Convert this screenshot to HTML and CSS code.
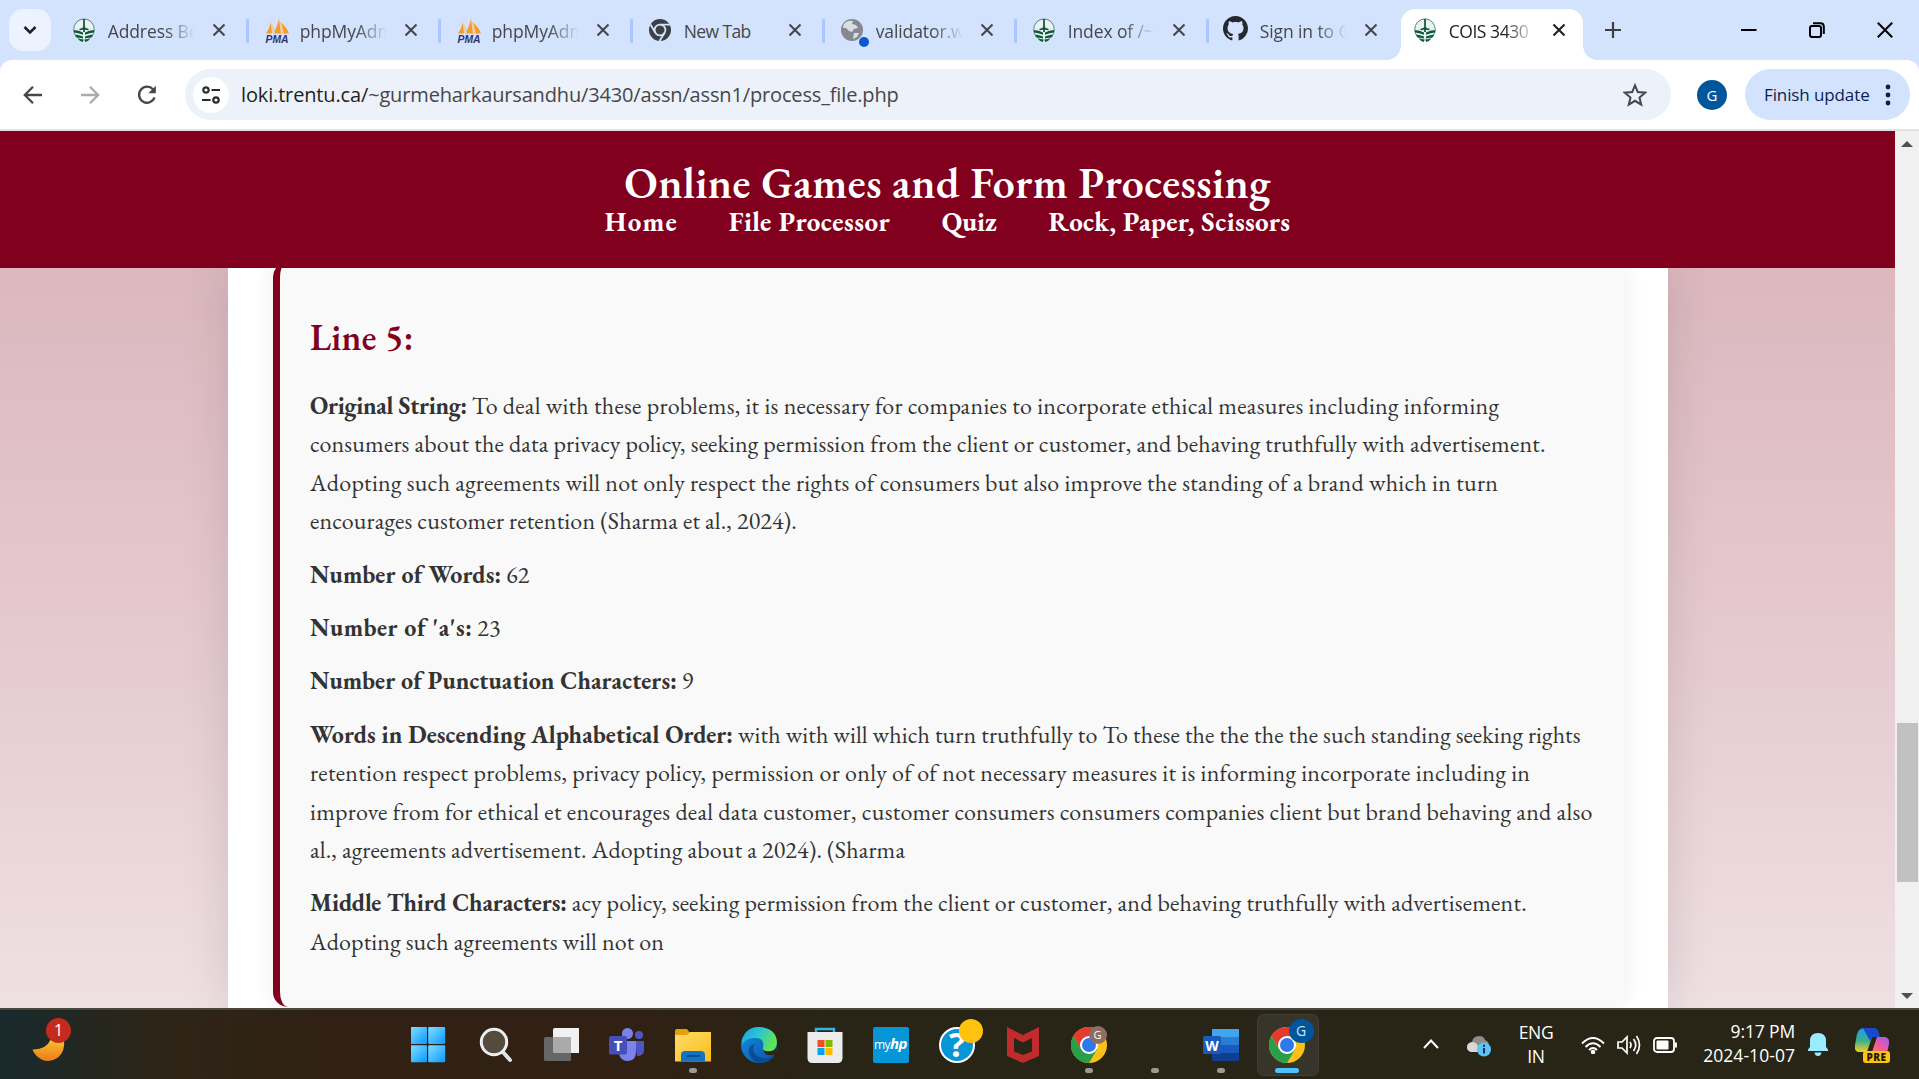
FILE: index.html
```html
<!DOCTYPE html>
<html lang="en">
<head>
<meta charset="utf-8">
<title>COIS 3430</title>
<link rel="stylesheet" href="styles.css">
</head>
<body>
<svg class="defs" width="0" height="0" aria-hidden="true">
  <defs>
    <linearGradient id="gold" x1="0" y1="0" x2="0" y2="1"><stop offset="0" stop-color="#f7c331"/><stop offset="1" stop-color="#ee7a17"/></linearGradient>
    <linearGradient id="win" x1="0" y1="0" x2="1" y2="1"><stop offset="0" stop-color="#7fe0ff"/><stop offset="1" stop-color="#0a98ff"/></linearGradient>
    <linearGradient id="folder" x1="0" y1="0" x2="1" y2="1"><stop offset="0" stop-color="#ffdc6b"/><stop offset="1" stop-color="#fbbd17"/></linearGradient>
    <linearGradient id="edgeTop" x1="0" y1="0" x2="1" y2=".4"><stop offset="0" stop-color="#1a9fe0"/><stop offset=".5" stop-color="#2cc4d6"/><stop offset="1" stop-color="#62e455"/></linearGradient>
    <linearGradient id="edgeLow" x1="0" y1="0" x2="1" y2="1"><stop offset="0" stop-color="#1290e4"/><stop offset="1" stop-color="#0b4fa0"/></linearGradient>
    <linearGradient id="copA" x1="0" y1="0" x2="0" y2="1"><stop offset="0" stop-color="#1c9cf0"/><stop offset=".55" stop-color="#3fb287"/><stop offset="1" stop-color="#f5cf22"/></linearGradient>
    <linearGradient id="copB" x1="1" y1="0" x2="0" y2="1"><stop offset="0" stop-color="#9a5cf5"/><stop offset=".5" stop-color="#ef5a9c"/><stop offset="1" stop-color="#ff8355"/></linearGradient>
  </defs>
  <symbol id="trent" viewBox="0 0 22 24">
    <ellipse cx="11" cy="11.5" rx="10.3" ry="10.6" fill="#e8f1f3" stroke="#4e8c72" stroke-width="1"/>
    <path d="M11 1v13M6.500 11.500q3.300 0 4.500-2 1.200 2 4.500 2" fill="none" stroke="#0d5237" stroke-width="1.700"/>
    <path d="M.8 12q5 .2 9.200 2.500v2.200Q5 15 1 14.500zM21.200 12q-5 .2-9.200 2.500v2.200q5-1.700 9-2.200zM2 16.500q4 .3 8 2v2Q6 19.500 3.200 19.200zM20 16.500q-4 .3-8 2v2q4-1 6.800-1.300zM5 21q3 0 5 .8V24q-3-.3-5-3zM17 21q-3 0-5 .8V24q3-.3 5-3z" fill="#0d5a3a"/>
  </symbol>
  <symbol id="x" viewBox="0 0 14 14"><path d="M1.500 1.500l11 11M12.500 1.500l-11 11" fill="none" stroke="currentColor" stroke-width="2.100"/></symbol>
  <symbol id="chrome" viewBox="0 0 36 36">
    <circle cx="18" cy="18" r="18" fill="#fbc116"/>
    <path d="M18 9h15.600A18 18 0 0 0 2.400 9L10 22z" fill="#e33b2e"/>
    <path d="M2.400 9A18 18 0 0 0 18 36l8-13.500L18 18l-8 4z" fill="#2b9e4a"/>
    <circle cx="18" cy="18" r="9" fill="#fff"/><circle cx="18" cy="18" r="7" fill="#2f78ec"/>
  </symbol>
</svg>

<div class="tabstrip">
  <div class="tab-search"><svg width="14" height="10" viewBox="0 0 14 10"><path d="M1.500 2L7 7.500 12.500 2" fill="none" stroke="#1f1f1f" stroke-width="2.500"/></svg></div>
  <div class="tab"><svg class="fav"><use href="#trent"/></svg><span class="tab-title">Address Bo</span><svg class="close"><use href="#x"/></svg></div>
  <div class="tab"><svg class="fav pma" viewBox="0 0 24 24">
    <path d="M1 15Q4 11 6 4l1 11zM8 15Q13 7 14 0l2 15zM17 15q1-6-1-11 6 5 8 11z" fill="#f79a2b"/><path d="M6 4l2 11h2Q9 8 6 4zM14 0l3 15h2Q18 7 14 0z" fill="#fcc98a"/><text x="12" y="24" text-anchor="middle" textLength="23" lengthAdjust="spacingAndGlyphs">PMA</text></svg><span class="tab-title">phpMyAdm</span><svg class="close"><use href="#x"/></svg></div>
  <div class="tab"><svg class="fav pma" viewBox="0 0 24 24">
    <path d="M1 15Q4 11 6 4l1 11zM8 15Q13 7 14 0l2 15zM17 15q1-6-1-11 6 5 8 11z" fill="#f79a2b"/><path d="M6 4l2 11h2Q9 8 6 4zM14 0l3 15h2Q18 7 14 0z" fill="#fcc98a"/><text x="12" y="24" text-anchor="middle" textLength="23" lengthAdjust="spacingAndGlyphs">PMA</text></svg><span class="tab-title">phpMyAdm</span><svg class="close"><use href="#x"/></svg></div>
  <div class="tab"><svg class="fav" viewBox="0 0 22 24"><circle cx="11" cy="12" r="11" fill="#3c4043"/><circle cx="11" cy="12" r="5.400" fill="none" stroke="#d3e3fd" stroke-width="1.800"/><path d="M11 6.600h10M6.300 14.700L1.500 6.500M15.700 14.700L10.500 23" stroke="#d3e3fd" stroke-width="1.800"/></svg><span class="tab-title short">New Tab</span><svg class="close"><use href="#x"/></svg></div>
  <div class="tab"><svg class="fav" viewBox="0 0 22 24"><circle cx="11" cy="12" r="11" fill="#85888c"/><path d="M5 4q4-2 7-1l-1 3 4 1 2 3-4 1-2 3-3-1-3-3-3 0q0-4 3-6zM13 15l5 0-2 4-4 2z" fill="#d8dde6"/></svg><i class="notice"></i><span class="tab-title">validator.w</span><svg class="close"><use href="#x"/></svg></div>
  <div class="tab"><svg class="fav"><use href="#trent"/></svg><span class="tab-title">Index of /~</span><svg class="close"><use href="#x"/></svg></div>
  <div class="tab last"><svg class="fav github" viewBox="0 0 16 16"><path fill="#24292f" d="M8 0C3.580 0 0 3.580 0 8c0 3.540 2.290 6.530 5.470 7.590.4.070.55-.17.55-.38 0-.19-.01-.82-.01-1.490-2.010.37-2.530-.49-2.690-.94-.09-.23-.48-.94-.82-1.130-.28-.15-.68-.52-.01-.53.63-.01 1.080.58 1.230.82.72 1.210 1.870.87 2.330.66.070-.52.28-.87.51-1.070-1.780-.2-3.640-.89-3.640-3.950 0-.87.31-1.590.82-2.150-.08-.2-.36-1.020.08-2.120 0 0 .67-.21 2.200.82.64-.18 1.320-.27 2-.27s1.360.09 2 .27c1.530-1.040 2.200-.82 2.200-.82.44 1.100.16 1.920.08 2.120.51.56.82 1.270.82 2.150 0 3.070-1.870 3.750-3.650 3.950.29.25.54.73.54 1.480 0 1.070-.01 1.930-.01 2.200 0 .21.15.46.55.38A8.010 8.010 0 0 0 16 8c0-4.420-3.580-8-8-8z"/></svg><span class="tab-title">Sign in to G</span><svg class="close"><use href="#x"/></svg></div>
  <div class="tab active"><svg class="fav"><use href="#trent"/></svg><span class="tab-title">COIS 3430</span><svg class="close"><use href="#x"/></svg></div>
  <svg class="new-tab" viewBox="0 0 16 16"><path d="M8 0v16M0 8h16" stroke="#3c4043" stroke-width="2.200"/></svg>
  <div class="win-controls">
    <svg width="16" height="16" viewBox="0 0 16 16"><path d="M0 8h15.500" stroke="#000" stroke-width="2"/></svg>
    <svg width="16" height="16" viewBox="0 0 16 16" fill="none" stroke="#000" stroke-width="2"><rect x="1" y="4" width="11" height="11" rx="2"/><path d="M4 1.200h7.500q3.300 0 3.300 3.300V12"/></svg>
    <svg width="16" height="16" viewBox="0 0 16 16"><path d="M.8.8l14.400 14.400M15.200.8L.8 15.200" stroke="#000" stroke-width="2"/></svg>
  </div>
</div>

<div class="toolbar-bg">
<div class="toolbar">
  <svg class="nav-ic" viewBox="0 0 20 20"><path d="M19 10H2.500M10 1.800L1.800 10l8.200 8.200" fill="none" stroke="#45474a" stroke-width="2.300"/></svg>
  <svg class="nav-ic" viewBox="0 0 20 20"><path d="M1 10h16.500M10 1.800l8.200 8.200-8.200 8.200" fill="none" stroke="#a9abad" stroke-width="2.300"/></svg>
  <svg class="nav-ic" viewBox="0 0 20 20"><path d="M17.600 12.500A8 8 0 1 1 16 4.300l2 2" fill="none" stroke="#45474a" stroke-width="2.300"/><path d="M18.800.8v7.500h-7.500z" fill="#45474a"/></svg>
  <div class="omnibox">
    <span class="site-chip"><svg width="18" height="18" viewBox="0 0 18 18" fill="none" stroke="#2a2c2e" stroke-width="2.200"><circle cx="4" cy="4" r="2.700"/><path d="M9.500 4H18M0 14h8.500"/><circle cx="14" cy="14" r="2.700"/></svg></span>
    <span class="url"><b>loki.trentu.ca/</b>~gurmeharkaursandhu/3430/assn/assn1/process_file.php</span>
    <svg class="star" viewBox="0 0 24 24"><path d="M12 2.300l2.800 6.800 7.300.6-5.600 4.800 1.700 7.200-6.200-3.900-6.200 3.900 1.700-7.200L1.900 9.700l7.300-.6z" fill="none" stroke="#45474a" stroke-width="2"/></svg>
  </div>
  <span class="avatar">G</span>
  <div class="update"><span>Finish update</span><svg width="6" height="22" viewBox="0 0 6 22" fill="#0a1f52"><circle cx="3" cy="3" r="2.400"/><circle cx="3" cy="11" r="2.400"/><circle cx="3" cy="19" r="2.400"/></svg></div>
</div>
</div>

<div class="viewport">
  <div class="page">
    <header class="site-header">
      <h1>Online Games and Form Processing</h1>
      <nav><a class="n1">Home</a><a class="n2">File Processor</a><a class="n3">Quiz</a><a class="n4">Rock, Paper, Scissors</a></nav>
    </header>
    <div class="page-body">
      <main class="container">
        <section class="card">
          <h2>Line 5:</h2>
          <p><strong class="tn26">Original String:</strong> <span class="t25">To deal with these problems, it is necessary for companies to incorporate ethical measures including informing</span><br><span class="t16">consumers about the data privacy policy, seeking permission from the client or customer, and behaving truthfully with advertisement.</span><br><span class="t25">Adopting such agreements will not only respect the rights of consumers but also improve the standing of a brand which in turn</span><br><span class="t14">encourages customer retention (Sharma et al., 2024).</span></p>
          <p><strong class="t16">Number of Words:</strong> 62</p>
          <p><strong class="t56">Number of 'a's:</strong> 23</p>
          <p><strong class="t10">Number of Punctuation Characters:</strong> 9</p>
          <p><strong class="t10">Words in Descending Alphabetical Order:</strong> <span class="t12">with with will which turn truthfully to To these the the the the such standing seeking rights</span><br><span class="t27">retention respect problems, privacy policy, permission or only of of not necessary measures it is informing incorporate including in</span><br><span class="t25">improve from for ethical et encourages deal data customer, customer consumers consumers companies client but brand behaving and also</span><br><span class="t16">al., agreements advertisement. Adopting about a 2024). (Sharma</span></p>
          <p><strong class="tn08">Middle Third Characters:</strong> <span class="t16">acy policy, seeking permission from the client or customer, and behaving truthfully with advertisement.</span><br><span class="t14">Adopting such agreements will not on</span></p>
        </section>
      </main>
    </div>
  </div>
  <div class="scrollbar"><i class="up"></i><i class="thumb"></i><i class="down"></i></div>
</div>

<footer class="taskbar">
  <div class="weather">
    <svg width="34" height="34" viewBox="0 0 34 34"><path d="M.5 19.500Q14 20 19 9l13 1q1.500 11-6 17.500-8 6-16.500 2Q2.500 25.500.5 19.500z" fill="url(#gold)"/></svg>
    <span class="count">1</span>
  </div>
  <div class="apps">
    <div class="app"><svg viewBox="1.500 0 36 36" fill="url(#win)"><rect x=".5" width="17" height="17" rx="1"/><rect x="18.700" width="17" height="17" rx="1"/><rect x=".5" y="18.200" width="17" height="17" rx="1"/><rect x="18.700" y="18.200" width="17" height="17" rx="1"/></svg></div>
    <div class="app"><svg viewBox="0 0 36 36"><path d="M25 24l8 9" stroke="#dfe2e5" stroke-width="4" stroke-linecap="round"/><circle cx="17" cy="15" r="12.700" fill="#544a3d" stroke="#eceef0" stroke-width="3"/></svg></div>
    <div class="app"><svg viewBox="0 0 36 36"><rect x="10" y="1" width="27" height="25" rx="1.500" fill="#f1f1f1"/><rect x="1" y="10" width="27" height="24" rx="1.500" fill="#666"/><path d="M10 10h18v16H11.500q-1.500 0-1.500-1.500z" fill="#aaa"/></svg></div>
    <div class="app"><svg viewBox="0 0 36 36"><circle cx="30" cy="8" r="4" fill="#4e56c4"/><path d="M26 14h9v9q0 6-7 6z" fill="#4e56c4"/><circle cx="18.500" cy="6.500" r="5.500" fill="#7b83eb"/><path d="M10 14h17v11q0 9-9 9-6 0-8-7z" fill="#7b83eb"/><rect y="9" width="18" height="18.500" rx="1.500" fill="#464eb8"/><text x="9" y="23.500" class="glyph g15">T</text></svg></div>
    <div class="app open"><svg viewBox="0 0 36 36"><path d="M0 4q0-2 2-2h10l3 4v4H0z" fill="#e0a10c"/><path d="M0 8h12l3-3h21v29.500H0z" fill="url(#folder)"/><path d="M6 34.500V28q0-4 4-4h16q4 0 4 4v6.500z" fill="#1273c4"/><path d="M11 29h14" stroke="#0b4f91" stroke-width="2"/></svg></div>
    <div class="app"><svg viewBox="0 0 36 36"><circle cx="18" cy="18" r="18" fill="url(#edgeLow)"/><path d="M1 13Q5 0 18 0q17 1 18 15 0 9-9 9.500-6 0-5-4 2-9-7-9.500Q5 10 1 18z" fill="url(#edgeTop)"/><path d="M14 17q-4 6 1 11 8 7 19 0-5 8-15 8Q7 34 8 22q1-4 6-5z" fill="#0c4a95"/><path d="M36 19q-1 5-7 5.500-7 0-7-3 1 9 12 6z" fill="#2a2516"/></svg></div>
    <div class="app"><svg viewBox="0 0 36 36"><path d="M9 8V2h18v6" fill="none" stroke="#31b4e8" stroke-width="2.400"/><path d="M.5 5h35v26q0 5-5 5h-25q-5 0-5-5z" fill="#ececec"/><rect x="10.500" y="13" width="7" height="7" fill="#f05022"/><rect x="18.500" y="13" width="7" height="7" fill="#7fba00"/><rect x="10.500" y="21" width="7" height="7" fill="#00a4ef"/><rect x="18.500" y="21" width="7" height="7" fill="#ffb900"/></svg></div>
    <div class="app"><svg viewBox="0 0 36 36"><rect width="36" height="36" rx="2" fill="#0696d7"/><text x="17.500" y="22" class="glyph hp">my<tspan class="hpb">hp</tspan></text></svg></div>
    <div class="app"><svg viewBox="0 0 36 36"><circle cx="18" cy="18" r="17" fill="#0696d7" stroke="#fff" stroke-width="2"/><text x="18" y="30" class="glyph g34">?</text></svg><i class="dot-yellow"></i></div>
    <div class="app"><svg viewBox="0 0 36 36"><path d="M2 0l16 8 16-8v29l-16 7-16-7z" fill="#c02b2d"/><path d="M9 11l9 4.500 9-4.500v13.500L18 28l-9-3.500z" fill="#2a2516"/></svg></div>
    <div class="app open"><svg><use href="#chrome"/></svg><span class="who brown">G</span></div>
    <div class="app open"></div>
    <div class="app open"><svg viewBox="0 0 36 36"><rect x="9" y="2" width="27" height="8" fill="#41a5ee"/><rect x="9" y="10" width="27" height="8" fill="#2b7cd3"/><rect x="9" y="18" width="27" height="8" fill="#185abd"/><rect x="9" y="26" width="27" height="8" fill="#103f91"/><rect x="0" y="9" width="18" height="18" rx="1.500" fill="#185abd"/><text x="9" y="23.500" class="glyph g14">W</text></svg></div>
    <div class="app open current"><svg><use href="#chrome"/></svg><span class="who blue">G</span></div>
  </div>
  <div class="tray">
    <svg class="chev" viewBox="0 0 16 10"><path d="M1 9l7-7.500L15 9" fill="none" stroke="#fff" stroke-width="2"/></svg>
    <svg class="cloud" viewBox="0 0 24 22"><path d="M4 17q-4-1-4-5t5-5q1-6 7-6 5 0 6 4 3 1 4 4z" fill="#8d8d8a"/><path d="M4 17q-4-1-4-5t5-5q5 0 6 5v5z" fill="#d8d8d6"/><circle cx="17" cy="14.500" r="7" fill="#5cc4f7"/><path d="M17 13v5.500M17 9.800v2" stroke="#12334a" stroke-width="2"/></svg>
    <div class="lang">ENG<br>IN</div>
    <svg class="wifi" viewBox="0 0 24 18" fill="none" stroke="#fff" stroke-width="1.900"><path d="M1 7.500q11-11 22 0M4.500 11q7.500-7.500 15 0M8 14q4-4 8 0"/><circle cx="12" cy="16" r="1.300" fill="#fff"/></svg>
    <svg class="spk" viewBox="0 0 24 20" fill="none" stroke="#fff" stroke-width="1.700"><path d="M1 7h4l5-5v16l-5-5H1zM13 7q2 3 0 6M16.500 4q4.500 6 0 12M19.500 1q6 9 0 18"/></svg>
    <svg class="bat" viewBox="0 0 24 16"><rect x="1" y="1" width="20" height="14" rx="3" fill="none" stroke="#fff" stroke-width="1.800"/><rect x="3.500" y="3.500" width="12" height="9" rx="1" fill="#fff"/><path d="M22.800 5.500v5" stroke="#fff" stroke-width="2.200"/></svg>
    <div class="clock">9:17 PM<br><span>2024-10-07</span></div>
    <svg class="bell" viewBox="0 0 20 23"><path d="M0 18v-1.500l2-2.500V8q0-8 8-8t8 8v6l2 2.500V18zM6.500 19.500h7Q13 23 10 23t-3.500-3.500z" fill="#99ebff"/></svg>
    <div class="copilot"><svg width="34" height="34" viewBox="0 0 34 34"><path d="M12 24H3q-4-1-3-7l2-11Q4 0 9 0h11z" fill="url(#copA)"/><path d="M8 0h12q4 1 5 9h-6q-3 0-4 4z" fill="#1648d0"/><path d="M20 9h10q5 1 4 7l-2 9H14z" fill="url(#copB)"/><path d="M19 9h3l-5 15h-4z" fill="#282516"/></svg><span>PRE</span></div>
  </div>
</footer>
</body>
</html>
```
FILE: styles.css
```css
* { box-sizing: border-box; }
html, body { height: 100%; }
body {
  margin: 0;
  display: flex;
  flex-direction: column;
  overflow: hidden;
  font-family: "Open Sans", "Noto Sans", sans-serif;
  background: #d3e3fd;
}
svg { display: block; flex: none; }
.defs { position: absolute; }

/* Tab strip */
.tabstrip { height: 60px; flex: none; display: flex; align-items: center; padding-left: 9px; }
.tab-search {
  width: 42px; height: 42px; margin-right: 5.700px; border-radius: 14px; flex: none;
  background: #ecf2fe; display: flex; align-items: center; justify-content: center;
}
.tab {
  position: relative; width: 192px; height: 51px; margin-top: 9px; padding: 0 0 9px 16px; flex: none;
  display: flex; align-items: center; color: #45474a;
}
.tab::after { content: ""; position: absolute; right: 0; top: 10px; width: 3px; height: 24px; background: #a8c7fa; border-radius: 1px; }
.tab.last::after { display: none; }
.fav { width: 22px; height: 24px; margin-right: 13px; }
.fav.pma { width: 24px; height: 27px; margin: 0 11px 0 0; overflow: visible; }
.pma text { font: italic 700 10px "Liberation Sans", sans-serif; fill: #33336b; }
.fav.github { width: 25px; height: 25px; margin: 0 12px 4px -2px; }
.notice { position: absolute; left: 34px; top: 28px; width: 10px; height: 10px; border-radius: 50%; background: #0b57d0; }
.tab-title {
  width: 86px; overflow: hidden; white-space: nowrap; font-size: 17.500px; letter-spacing: -.1px; line-height: 26px; padding-top: 2px;
  -webkit-mask-image: linear-gradient(90deg, #000 56px, transparent 87px);
  mask-image: linear-gradient(90deg, #000 56px, transparent 87px);
}
.tab-title.short { letter-spacing: -.6px; -webkit-mask-image: none; mask-image: none; }
.close { width: 14px; height: 14px; margin: 0 0 1px 18px; }
.tab.active { width: 182px; padding-left: 13px; background: #fff; border-radius: 14px 14px 0 0; color: #1f1f1f; }
.tab.active .tab-title { width: 84px; letter-spacing: -.45px; }
.tab.active .close { margin-left: 19px; }
.tab.active::before, .tab.active::after {
  content: ""; position: absolute; top: auto; bottom: 0; width: 14px; height: 14px; border-radius: 0;
}
.tab.active::before { left: -14px; background: radial-gradient(circle at 0 0, transparent 13.500px, #fff 14px); }
.tab.active::after { right: -14px; background: radial-gradient(circle at 100% 0, transparent 13.500px, #fff 14px); }
.new-tab { width: 16px; height: 16px; margin-left: 22px; }
.win-controls { margin-left: auto; margin-right: 26px; display: flex; gap: 52px; }

/* Toolbar */
.toolbar-bg { flex: none; height: 71px; background: #d3e3fd; }
.toolbar {
  height: 71px; background: #fff; border-bottom: 2px solid #e0e2e3; border-radius: 12px 12px 0 0;
  display: flex; align-items: center; padding-left: 23px;
}
.nav-ic { width: 20px; height: 20px; margin-right: 37px; }
.nav-ic:nth-of-type(3) { margin-right: 29px; }
.omnibox { width: 1486px; height: 51px; border-radius: 26px; background: #ecf1fa; display: flex; align-items: center; padding: 0 24px 0 8px; margin-left: -1px; }
.site-chip { width: 36px; height: 36px; border-radius: 50%; background: #fff; display: flex; align-items: center; justify-content: center; }
.url { margin-left: 12px; font-size: 20px; letter-spacing: -.15px; color: #45474a; }
.url b { font-weight: 400; color: #1f1f1f; }
.star { width: 24px; height: 24px; margin-left: auto; }
.avatar { width: 30px; height: 30px; margin-left: 26px; border-radius: 50%; background: #00569b; color: #fff; font-size: 15px; line-height: 30px; text-align: center; }
.update {
  width: 165px; height: 51px; margin-left: 18px; border-radius: 26px; background: #d3e3fd; color: #0a1f52;
  display: flex; align-items: center; padding-left: 19px; gap: 15px; font-size: 17px; letter-spacing: -.11px; white-space: nowrap;
}

/* Web page */
.viewport { flex: 1; min-height: 0; display: flex; }
.page { flex: 1; display: flex; flex-direction: column; font-family: "EB Garamond", "Liberation Serif", serif; background: #fff; }
.site-header { height: 137px; flex: none; padding-top: 31px; background: #80001e; color: #fff; }
h1 { margin: 0 0 3px; text-align: center; font-size: 44px; line-height: 42px; font-weight: 600; letter-spacing: .381px; }
nav { display: flex; justify-content: center; gap: 51.700px; font-size: 27px; line-height: 30px; font-weight: 700; }
.n1 { letter-spacing: 1.240px; margin-right: -1px; }
.n2 { letter-spacing: .469px; }
.n3 { letter-spacing: -.058px; }
.n4 { letter-spacing: .284px; }
.page-body { flex: 1; min-height: 0; overflow: hidden; background: linear-gradient(#dcb7be, #e6ccd2 55%, #efe0e3); }
.container { width: 1440px; height: 100%; margin-left: 228px; padding: 0 44px 0 45px; background: #fff; box-shadow: 0 0 45px rgba(0, 0, 0, .12); }
.card {
  position: relative; top: -6px; height: 745px; padding: 55px 30px 0; border-left: 7px solid #80001e; border-radius: 15px;
  background: #f9f9f9; box-shadow: 0 0 22px rgba(0, 0, 0, .08); color: #333;
}
h2 { margin: 0 0 29px; font-size: 36px; line-height: 41px; font-weight: 600; color: #80001e; letter-spacing: .242px; }
p { margin: 0 0 15px; font-size: 24px; line-height: 38.400px; white-space: nowrap; }
.tn26 { letter-spacing: -.26px; }
.tn08 { letter-spacing: -.078px; }
.t10 { letter-spacing: .098px; }
.t12 { letter-spacing: .124px; }
.t14 { letter-spacing: .14px; }
.t16 { letter-spacing: .163px; }
.t25 { letter-spacing: .254px; }
.t27 { letter-spacing: .272px; }
.t56 { letter-spacing: .567px; }

.scrollbar { width: 24px; flex: none; background: #f0f0f0; display: flex; flex-direction: column; align-items: center; padding: 10px 0 9px; }
.up, .down { border: 6px solid transparent; border-top-width: 0; border-bottom: 6px solid #505050; }
.down { border-top: 6px solid #505050; border-bottom-width: 0; margin-top: auto; }
.thumb { width: 21px; height: 159px; margin: 576px 0 0 1px; background: #c1c1c1; }

/* Taskbar */
.taskbar {
  height: 71px; flex: none; display: flex; align-items: center; border-top: 2px solid #49463d; color: #fff;
  background: linear-gradient(90deg, #182a2d 0, #25261f 95px, #2d2517 160px, #302114 320px, #302114 640px, #282516 860px, #282516 100%);
}
.weather { position: relative; width: 395.500px; height: 69px; flex: none; padding: 20px 0 0 32px; }
.count { position: absolute; left: 46px; top: 8px; width: 25px; height: 25px; border-radius: 50%; background: #c42b1c; font-size: 16px; line-height: 24px; text-align: center; }
.apps { width: 924px; display: grid; grid-template-columns: repeat(14, 66px); }
.app { position: relative; height: 69px; display: flex; align-items: center; justify-content: center; }
.app svg { position: relative; width: 36px; height: 36px; }
.open::after { content: ""; position: absolute; left: 29px; top: 58px; width: 8px; height: 5px; border-radius: 3px; background: #9c9a93; }
.current::before { content: ""; position: absolute; left: 3px; top: 4px; width: 60px; height: 60px; border-radius: 7px; background: #37342a; border: 1px solid #413e34; }
.current::after { left: 21px; width: 24px; background: #4cc2ff; }
.glyph { fill: #fff; text-anchor: middle; font-family: "Open Sans", sans-serif; font-weight: 700; }
.g14 { font-size: 14px; }
.g15 { font-size: 15px; }
.g34 { font-size: 34px; }
.hp { font-weight: 400; font-size: 12px; letter-spacing: -.5px; }
.hpb { font-weight: 700; font-style: italic; font-size: 15px; }
.dot-yellow { position: absolute; left: 35px; top: 9px; width: 24px; height: 24px; border-radius: 50%; background: #ffc20e; }
.who { position: absolute; border-radius: 50%; text-align: center; }
.brown { left: 33px; top: 16px; width: 18px; height: 18px; background: #8d6e63; font-size: 11px; line-height: 18px; }
.blue { left: 35px; top: 9px; width: 25px; height: 24px; background: #00569b; color: #cfe3f5; font-size: 14px; line-height: 24px; }

.tray { display: flex; align-items: center; font-size: 17.500px; line-height: 23.500px; }
.chev { width: 16px; height: 10px; margin-left: 103.500px; margin-top: -2px; }
.cloud { width: 24px; height: 22px; margin-left: 28px; margin-top: 2px; }
.lang { width: 60px; margin-left: 15px; text-align: center; letter-spacing: -.3px; }
.wifi { width: 24px; height: 18px; margin-left: 15px; }
.spk { width: 24px; height: 20px; margin-left: 12px; }
.bat { width: 24px; height: 16px; margin-left: 12px; }
.clock { width: 97px; margin-left: 21px; text-align: right; letter-spacing: -.15px; margin-top: -2px; }
.clock span { letter-spacing: .05px; }
.bell { width: 20px; height: 23px; margin-left: 13px; }
.copilot { position: relative; margin-left: 27px; }
.copilot span { position: absolute; left: 8px; top: 23px; width: 27px; height: 12px; border-radius: 3px; background: #ffc40c; color: #1c1a10; font-size: 10px; font-weight: 800; line-height: 12px; text-align: center; letter-spacing: .5px; }
```
